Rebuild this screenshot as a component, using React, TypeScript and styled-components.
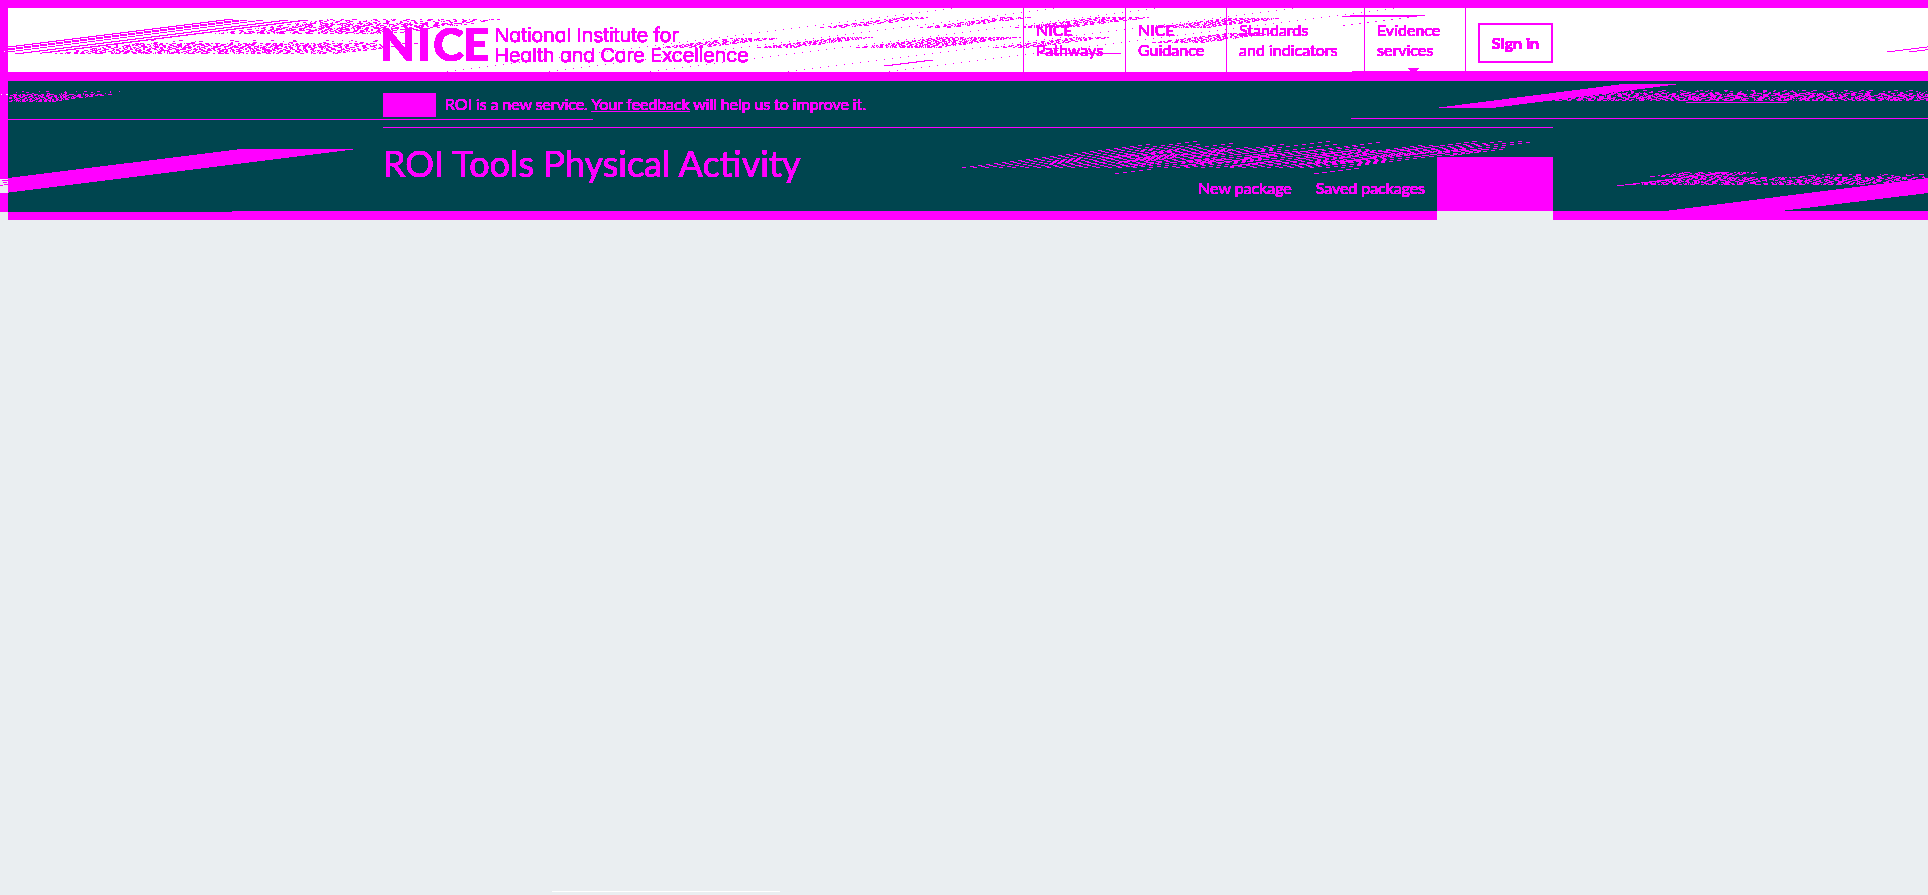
import React from "react";
import styled, { createGlobalStyle } from "styled-components";

const ink = "#ff00ff";
const teal = "#00454f";
const paper = "#eaeef1";

const GlobalStyle = createGlobalStyle`
  *, *::before, *::after { box-sizing: border-box; }
  body { margin: 0; background: ${paper}; font-family: Lato, "Liberation Sans", sans-serif; color: ${ink}; overflow: hidden; }
  a { color: inherit; text-decoration: none; }
`;

const Page = styled.div`
  position: relative;
  display: flex;
  flex-direction: column;
  height: 895px;
  overflow: hidden;
`;

const Masthead = styled.div`
  display: flex;
  flex-direction: column;
  height: 220px;
  border-top: 8px solid ${ink};
  border-left: 8px solid ${ink};
`;

const Container = styled.div`
  width: 1170px;
  margin-left: 375px;
`;

const Header = styled.header`
  height: 73px;
  background: #fff;
  border-bottom: 9px solid ${ink};
`;

const HeaderRow = styled(Container)`
  display: flex;
  height: 64px;
`;

const Logo = styled.svg`
  display: block;
  width: 390px;
  height: 64px;
  margin-left: -10px;
  margin-right: auto;
  overflow: visible;
  filter: url(#solid);
`;

const Tagline = styled.g`
  font-family: Inter, "Liberation Sans", sans-serif;
  font-size: 19px;
  font-weight: 300;
  font-feature-settings: "cv11";
  stroke: ${ink};
  stroke-width: 0.2px;
`;

const Services = styled.nav`
  display: flex;
  border-right: 1px solid ${ink};
`;

const Service = styled.a<{ $width: number }>`
  width: ${(p) => p.$width}px;
  padding: 12px 0 0 12px;
  border-left: 1px solid ${ink};
  font-size: 16px;
  line-height: 20px;
  white-space: nowrap;
`;

const Crisp = styled.span<{ $weight?: number; $tracking?: number }>`
  display: inline-block;
  font-weight: ${(p) => p.$weight ?? 400};
  letter-spacing: ${(p) => p.$tracking ?? 0}px;
  filter: url(#solid);
`;

const SignIn = styled.a`
  display: flex;
  align-items: center;
  justify-content: center;
  width: 75px;
  height: 40px;
  margin: 15px 0 0 12px;
  padding-bottom: 2px;
  border: 2px solid ${ink};
  font-size: 16px;
`;

const Hero = styled.section`
  height: 139px;
  background: ${teal};
  border-bottom: 9px solid ${ink};
`;

const Notice = styled.div`
  display: flex;
  align-items: center;
  height: 47px;
  padding-bottom: 1px;
  border-bottom: 1px solid ${ink};
  font-size: 16px;
  line-height: 24px;
  u { text-underline-offset: 1px; }
`;

const Phase = styled.span`
  width: 53px;
  height: 24px;
  margin: 3px 9px 0 0;
  background: ${ink};
`;

const TitleRow = styled.div`
  display: flex;
  justify-content: space-between;
  height: 83px;
`;

const Title = styled.h1`
  margin: 13px 0 0;
  font-size: 36px;
  font-weight: 400;
  line-height: 44px;
`;

const Tabs = styled.nav`
  display: flex;
  align-items: flex-end;
`;

const Tab = styled.a<{ $active?: boolean }>`
  display: flex;
  align-items: center;
  justify-content: center;
  width: ${(p) => (p.$active ? "116px" : "auto")};
  height: ${(p) => (p.$active ? "54px" : "48px")};
  padding: 0 12px;
  background: ${(p) => (p.$active ? ink : "transparent")};
  font-size: 16px;
`;

const Overlay = styled.svg`
  position: absolute;
  left: 0;
  top: 0;
  pointer-events: none;
`;

const Footer = styled.div`
  width: 228px;
  height: 1px;
  margin: auto 0 3px 552px;
  background: #fff;
`;

type Swarm = { x0: number; x1: number; y0: number; y1: number; density: number; dash: number };

const swarms: Swarm[] = [
  { x0: 215, x1: 505, y0: 19, y1: 33, density: 0.3, dash: 3 },
  { x0: 232, x1: 460, y0: 23, y1: 33, density: 0.32, dash: 3 },
  { x0: 40, x1: 385, y0: 40, y1: 53, density: 0.12, dash: 3 },
  { x0: 60, x1: 420, y0: 43, y1: 53, density: 0.45, dash: 3 },
  { x0: 658, x1: 778, y0: 38, y1: 47, density: 0.55, dash: 3 },
  { x0: 757, x1: 875, y0: 37, y1: 47, density: 0.6, dash: 3 },
  { x0: 856, x1: 1020, y0: 37, y1: 47, density: 0.58, dash: 3 },
  { x0: 993, x1: 1110, y0: 37, y1: 47, density: 0.5, dash: 3 },
  { x0: 820, x1: 930, y0: 17, y1: 27, density: 0.5, dash: 3 },
  { x0: 920, x1: 1032, y0: 17, y1: 27, density: 0.5, dash: 3 },
  { x0: 1015, x1: 1150, y0: 17, y1: 27, density: 0.55, dash: 3 },
  { x0: 1152, x1: 1280, y0: 18, y1: 27, density: 0.6, dash: 3 },
  { x0: 1152, x1: 1276, y0: 33, y1: 42, density: 0.55, dash: 3 },
  { x0: -70, x1: 125, y0: 91, y1: 93, density: 0.12, dash: 2 },
  { x0: -70, x1: 110, y0: 94, y1: 101, density: 0.55, dash: 3 },
  { x0: 1550, x1: 2010, y0: 90, y1: 100, density: 0.22, dash: 3 },
  { x0: 1555, x1: 2010, y0: 93, y1: 100, density: 0.45, dash: 4 },
  { x0: 1650, x1: 1760, y0: 172, y1: 176, density: 0.5, dash: 4 },
  { x0: 1630, x1: 1800, y0: 177, y1: 184, density: 0.55, dash: 4 },
  { x0: 1800, x1: 1940, y0: 174, y1: 176, density: 0.25, dash: 4 },
  { x0: 1755, x1: 1925, y0: 177, y1: 184, density: 0.55, dash: 4 },
];

function makeRandom(start: number) {
  let seed = start;
  return () => {
    seed = (seed * 1664525 + 1013904223) >>> 0;
    return seed / 4294967296;
  };
}

// Scatter short horizontal dashes inside parallelograms that climb one pixel in eight.
function scatter(list: Swarm[]): string {
  const rand = makeRandom(7321);
  let d = "";
  for (const s of list) {
    for (let y = s.y0; y <= s.y1; y++) {
      let x = s.x0 + (s.y1 - y) * 8;
      const end = s.x1 - (y - s.y0) * 8;
      while (x < end) {
        const len = 1 + Math.floor(rand() * s.dash * 1.4);
        if (x >= 8) d += `M${x} ${y}h${len}v1h-${len}z`;
        const gap = (len * (1 - s.density)) / s.density;
        x += len + Math.max(1, Math.round(gap * (0.4 + rand() * 1.2)));
      }
    }
  }
  return d;
}

function ramp(x: number, y: number, endY: number, len: number): string {
  let d = "";
  for (; y >= endY; y--, x += 8) d += `M${x} ${y}h${len}v1h-${len}z`;
  return d;
}

// Dashed streaks filling the wing above the tabs.
function wing(): string {
  const rand = makeRandom(991);
  let d = "";
  for (let base = 962; base < 1345; base += 10 + Math.floor(rand() * 7)) {
    const top = Math.max(141, 167 - Math.floor(16 + rand() * 12));
    d += ramp(base, 167, top, 4);
  }
  for (let i = 0; i < 110; i++) {
    const y = 150 + Math.floor(rand() * 17);
    const left = 1000 + (167 - y) * 8;
    const right = 1500 - (y - 149) * 8;
    d += ramp(Math.round(left + rand() * (right - left)), y, Math.max(149, y - 3), 4);
  }
  return d;
}

const texture =
  scatter(swarms) +
  wing() +
  [447, 549, 650, 788, 889].map((x) => ramp(x, 71, 8, 1)).join("") +
  ramp(1343, 25, 17, 2) +
  ramp(8, 46, 19, 9) +
  ramp(8, 48, 20, 7) +
  ramp(8, 49, 20, 7) +
  ramp(8, 51, 20, 7) +
  ramp(15, 53, 20, 9) +
  ramp(42, 52, 20, 10) +
  ramp(1115, 173, 169, 4) +
  ramp(1314, 173, 168, 5) +
  ramp(1344, 157, 141, 5) +
  ramp(1887, 51, 46, 8) +
  ramp(1909, 51, 49, 8) +
  ramp(1617, 185, 172, 7) +
  ramp(884, 65, 60, 9);

export default function App() {
  return (
    <Page>
      <GlobalStyle />
      <Masthead>
        <Header>
          <HeaderRow>
            <Logo viewBox="-10 0 390 64" fill={ink}>
              <text x="-3.5 34 50 80" y="53" fontFamily="Lato" fontWeight="900" fontSize="46.5">NICE</text>
              <Tagline>
                <text x="111.5" y="34" textLength="184" lengthAdjust="spacingAndGlyphs">National Institute for</text>
                <text x="111.5" y="54" textLength="254" lengthAdjust="spacingAndGlyphs">Health and Care Excellence</text>
              </Tagline>
            </Logo>
            <Services>
              <Service $width={102}><Crisp>NICE<br />Pathways</Crisp></Service>
              <Service $width={101}><Crisp>NICE<br />Guidance</Crisp></Service>
              <Service $width={138}><Crisp>Standards<br />and indicators</Crisp></Service>
              <Service $width={101}><Crisp>Evidence<br />services</Crisp></Service>
            </Services>
            <SignIn><Crisp $weight={700}>Sign in</Crisp></SignIn>
          </HeaderRow>
        </Header>
        <Hero>
          <Container>
            <Notice>
              <Phase />
              <Crisp $tracking={-0.1}>ROI is a new service. <u>Your feedback</u> will help us to improve it.</Crisp>
            </Notice>
            <TitleRow>
              <Title><Crisp>ROI Tools Physical Activity</Crisp></Title>
              <Tabs>
                <Tab><Crisp $tracking={-0.03}>New package</Crisp></Tab>
                <Tab><Crisp $tracking={-0.06}>Saved packages</Crisp></Tab>
                <Tab $active />
              </Tabs>
            </TitleRow>
          </Container>
        </Hero>
      </Masthead>
      <Footer />
      <Overlay width="1928" height="220" viewBox="0 0 1928 220" fill={ink} shapeRendering="crispEdges">
        <filter id="solid" x="-5%" y="-10%" width="110%" height="120%" colorInterpolationFilters="sRGB">
          <feComponentTransfer>
            <feFuncA type="linear" slope="60" intercept="-1" />
          </feComponentTransfer>
        </filter>
        <path d={texture} />
        <path d="M8 178L241 149H357L8 192.7zM1435 108L1623 84H1680L1492 108zM1665 211L1928 178V193L1781 211z" />
        <path d="M8 119h585v1H8zM1351 118h577v1H1351zM1686 102h101v1H1686zM1040 53h81v1h-81zM1350 15h75v1h-75zM1342 16h75v1h-75zM1352 71h576v1H1352zM1407 68h12l-4 4h-4z" />
        <path fill={paper} d="M0 179h8v14H0zM0 212h8v8H0zM1437 211h116v9H1437z" />
        <path d="M2 180h6v1H2zM3 182h4v1H3zM0 185h3v1H0zM4 184h4v1H4z" />
        <path fill={teal} d="M8 211h224v1H8z" />
        <path fill="#fff" d="M4 51h1v1H4zM1 94h1v1H1zM6 94h2v1H6z" />
      </Overlay>
    </Page>
  );
}
